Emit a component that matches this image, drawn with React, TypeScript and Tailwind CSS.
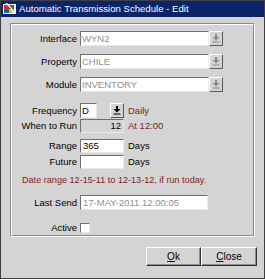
import React from "react";

// Automatic Transmission Schedule - Edit dialog (classic Forms look)

const FONT = { fontFamily: '"Liberation Sans", Arial, sans-serif' };

const sunken =
  "border border-t-[#6e6e6e] border-l-[#6e6e6e] border-b-[#e8e8e8] border-r-[#e8e8e8]";
const raised =
  "border border-t-[#ffffff] border-l-[#ffffff] border-b-[#5a5a5a] border-r-[#5a5a5a]";

function DropArrow({ dim }: { dim?: boolean }) {
  const c = dim ? "#8a8a8a" : "#000";
  return (
    <svg width="8" height="9" viewBox="0 0 8 9">
      <rect x="3" y="0" width="2" height="3" fill={c} />
      <path d="M0.5 3 H7.5 L4 6.5 Z" fill={c} />
      <rect x="0.5" y="7.5" width="7" height="1" fill={c} />
    </svg>
  );
}

function DropBtn({ dim }: { dim?: boolean }) {
  return (
    <div className={`w-[14px] h-[15px] flex items-center justify-center bg-[#d4d4d4] ${raised}`}>
      <DropArrow dim={dim} />
    </div>
  );
}

function Label({ children }: { children: React.ReactNode }) {
  return <div className="w-[65px] text-right text-[9.5px] leading-none text-black whitespace-nowrap">{children}</div>;
}

function Row({ label, mt, children }: { label: string; mt: string; children: React.ReactNode }) {
  return (
    <div className={`flex items-center gap-[3px] ${mt}`}>
      <Label>{label}</Label>
      {children}
    </div>
  );
}

function Combo({ value }: { value: string }) {
  return (
    <div className="flex items-center">
      <div className={`w-[129px] h-[15px] bg-white ${sunken} flex items-center px-[1px] text-[9.5px] text-[#909090] leading-none`}>
        {value}
      </div>
      <DropBtn dim />
    </div>
  );
}

function TitleIcon() {
  return (
    <svg width="13" height="12" viewBox="0 0 13 12">
      <rect x="0" y="1" width="13" height="10" fill="#f4f4f4" />
      <rect x="1" y="2" width="5" height="4" fill="#d32f2f" />
      <rect x="6" y="2" width="5" height="4" fill="#2e7d32" />
      <rect x="1" y="6" width="5" height="4" fill="#1565c0" />
      <rect x="6" y="6" width="5" height="4" fill="#f9a825" />
      <path d="M3 0 L8 5 L11 11" stroke="#fff" strokeWidth="1.2" fill="none" />
    </svg>
  );
}

function Button({ first, rest, w }: { first: string; rest: string; w: string }) {
  return (
    <div className={`${w} h-[19px] bg-[#d4d4d4] border border-t-[#ffffff] border-l-[#ffffff] border-b-[#303030] border-r-[#303030] shadow-[inset_-1px_-1px_0_#8a8a8a] flex items-center justify-center text-[10px] text-black`}>
      <span className="underline">{first}</span>
      {rest}
    </div>
  );
}

export default function App() {
  return (
    <div style={FONT} className="w-[265px] h-[279px] bg-[#d4d4d4] border border-[#404040] flex flex-col overflow-hidden">
      <div className="h-[16px] bg-[#0a246a] flex items-center gap-[3px] pl-[2px] shrink-0">
        <TitleIcon />
        <span className="text-white text-[9.6px] leading-none">Automatic Transmission Schedule - Edit</span>
      </div>

      <div className="mx-[9px] mt-[6px] h-[214px] border border-t-[#8a8a8a] border-l-[#8a8a8a] border-b-[#ffffff] border-r-[#ffffff]">
        <div className="h-full border border-t-[#ffffff] border-l-[#ffffff] border-b-[#8a8a8a] border-r-[#8a8a8a] pt-[6px] flex flex-col">
          <Row label="Interface" mt="mt-0">
            <Combo value="WYN2" />
          </Row>
          <Row label="Property" mt="mt-[8px]">
            <Combo value="CHILE" />
          </Row>
          <Row label="Module" mt="mt-[8px]">
            <Combo value="INVENTORY" />
          </Row>
          <Row label="Frequency" mt="mt-[11px]">
            <div className={`w-[17px] h-[15px] bg-white ${sunken} flex items-center px-[1px] text-[9.5px] leading-none`}>D</div>
            <div className="ml-[10px]">
              <DropBtn />
            </div>
            <span className="ml-[1px] text-[9.5px] leading-none text-[#851c1c]">Daily</span>
          </Row>
          <Row label="When to Run" mt="mt-[1px]">
            <div className={`w-[44px] h-[14px] bg-[#d4d4d4] ${sunken} flex items-center justify-end px-[2px] text-[9.5px] leading-none`}>12</div>
            <span className="ml-[1px] text-[9.5px] leading-none text-[#851c1c]">At 12:00</span>
          </Row>
          <Row label="Range" mt="mt-[6px]">
            <div className={`w-[44px] h-[14px] bg-white ${sunken} flex items-center px-[2px] text-[9.5px] leading-none`}>365</div>
            <span className="ml-[1px] text-[9.5px] leading-none">Days</span>
          </Row>
          <Row label="Future" mt="mt-[2px]">
            <div className={`w-[44px] h-[14px] bg-white ${sunken}`} />
            <span className="ml-[1px] text-[9.5px] leading-none">Days</span>
          </Row>
          <div className="mt-[4px] pl-[10px] text-[9.1px] leading-[14px] text-[#851c1c] whitespace-nowrap">
            Date range 12-15-11 to 12-13-12, if run today.
          </div>
          <Row label="Last Send" mt="mt-[8px]">
            <div className={`w-[128px] h-[15px] bg-white ${sunken} flex items-center px-[2px] text-[9.5px] text-[#909090] leading-none`}>
              17-MAY-2011 12:00:05
            </div>
          </Row>
          <Row label="Active" mt="mt-[13px]">
            <div className={`w-[10px] h-[10px] bg-white ${sunken}`} />
          </Row>
        </div>
      </div>

      <div className="flex justify-end pr-[7px] mt-[10px]">
        <Button first="O" rest="k" w="w-[55px]" />
        <Button first="C" rest="lose" w="w-[56px]" />
      </div>
    </div>
  );
}
